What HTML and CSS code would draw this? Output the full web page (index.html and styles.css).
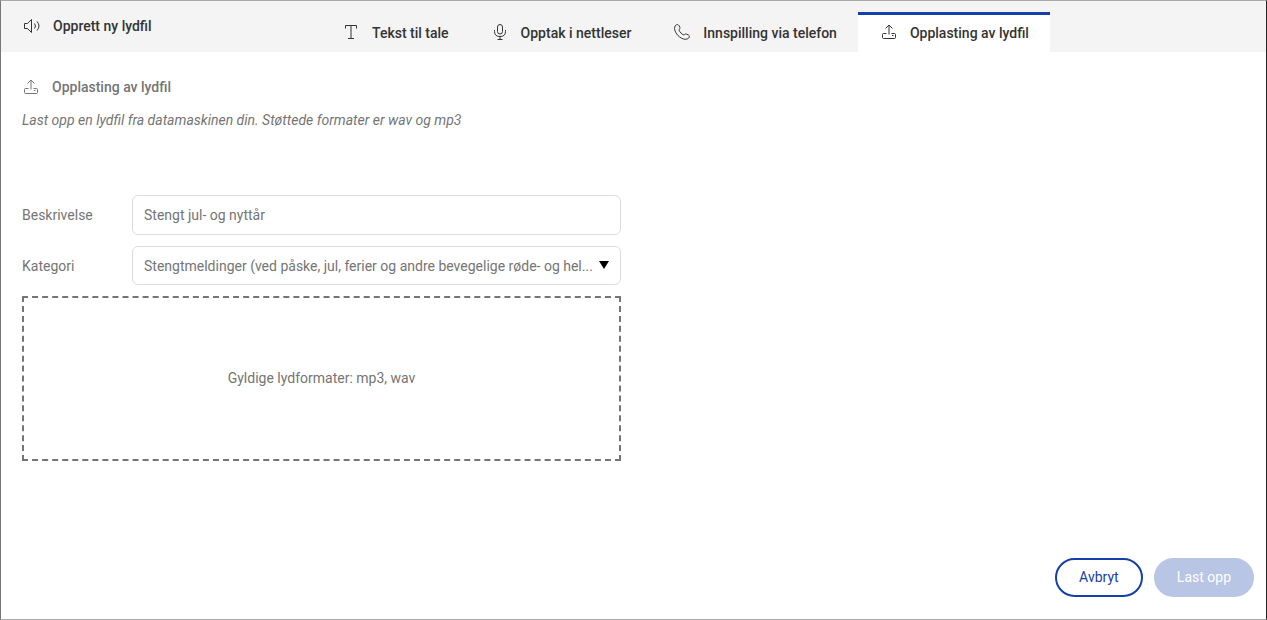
FILE: index.html
```html
<!DOCTYPE html>
<html lang="nb">
<head>
<meta charset="utf-8">
<meta name="viewport" content="width=device-width, initial-scale=1">
<title>Opprett ny lydfil</title>
<link rel="stylesheet" href="styles.css">
</head>
<body>
<svg class="sprite" aria-hidden="true">
  <symbol id="upload" viewBox="0 0 16 16">
    <path d="M8 10.500V1M4.500 4.500 8 1 11.500 4.500M5.500 9.500H2.500Q1.500 9.500 1.500 10.500V13.500Q1.500 14.500 2.500 14.500H13.500Q14.500 14.500 14.500 13.500V10.500Q14.500 9.500 13.500 9.500H10.500M11 11.500H12.500"/>
  </symbol>
</svg>
<div class="dialog">
  <header class="header">
    <h1 class="title">
      <svg class="icon icon-title" viewBox="0 0 18 16" aria-hidden="true"><path d="M1.500 5.500H4.500L8.500 1.500V14.500L4.500 10.500H1.500ZM11.500 5.500Q13.500 8 11.500 10.500M14 3.500Q18 8 14 12.500"/></svg>
      <span>Opprett ny lydfil</span>
    </h1>
    <nav class="tabs">
      <button type="button" class="tab">
        <svg class="icon" viewBox="0 0 16 16" aria-hidden="true"><path d="M2.500 4.500V1.500H13.500V4.500M8 1.500V14.500M5 14.500H11"/></svg>
        <span>Tekst til tale</span>
      </button>
      <button type="button" class="tab">
        <svg class="icon" viewBox="0 0 16 16" aria-hidden="true"><rect x="5.500" y="0.500" width="5" height="9.500" rx="2.500"/><path d="M2.500 6V7.500Q2.500 12.500 8 12.500T13.500 7.500V6M8 12.500V15.500M5.500 15.500H10.500"/></svg>
        <span>Opptak i nettleser</span>
      </button>
      <button type="button" class="tab">
        <svg class="icon" viewBox="0 0 16 16" aria-hidden="true"><path d="M1.500 1.500C2.500 .3 4.200.3 4.900 1.500L5.800 3.200C6.200 4.100 5.800 4.700 5.300 5.300 4.900 5.900 5 6.500 5.500 7.200 6.400 8.600 7.600 9.700 8.900 10.600 9.600 11 10.200 11 10.700 10.500 11.300 9.900 12 9.800 12.700 10.100L14.500 11.100C15.700 11.800 15.700 13 14.700 14 13 15.700 10.300 15.700 7.500 14.200 4.800 12.700 2.900 10.700 1.600 8.200.3 5.600.2 3.200 1.500 1.500Z"/></svg>
        <span>Innspilling via telefon</span>
      </button>
      <button type="button" class="tab tab-active" aria-current="page">
        <svg class="icon" aria-hidden="true"><use href="#upload"/></svg>
        <span>Opplasting av lydfil</span>
      </button>
    </nav>
  </header>
  <main class="content">
    <h2 class="subtitle">
      <svg class="icon icon-title" aria-hidden="true"><use href="#upload"/></svg>
      <span>Opplasting av lydfil</span>
    </h2>
    <p class="intro">Last opp en lydfil fra datamaskinen din. Støttede formater er wav og mp3</p>
    <form class="form" id="upload-form">
      <label for="description">Beskrivelse</label>
      <input class="field" id="description" type="text" value="Stengt jul- og nyttår">
      <label for="category">Kategori</label>
      <div class="select-wrap">
        <select class="field field-select" id="category">
          <option>Stengtmeldinger (ved påske, jul, ferier og andre bevegelige røde- og hel...</option>
        </select>
        <svg class="arrow" viewBox="0 0 10 8" aria-hidden="true"><path d="M0 0H10L5 8Z"/></svg>
      </div>
      <div class="dropzone">Gyldige lydformater: mp3, wav</div>
    </form>
  </main>
  <footer class="footer">
    <button type="button" class="btn btn-outline">Avbryt</button>
    <button type="submit" form="upload-form" class="btn btn-primary" disabled>Last opp</button>
  </footer>
</div>
</body>
</html>
```
FILE: styles.css
```css
* {
  box-sizing: border-box;
}

body {
  margin: 0;
  font-family: Roboto, "Noto Sans", sans-serif;
  font-size: 14px;
  line-height: 20px;
  color: #757575;
  background: #fff;
}

button,
input,
select {
  font: inherit;
  color: inherit;
}

.sprite {
  display: none;
}

.dialog {
  display: flex;
  flex-direction: column;
  min-height: 100vh;
  border: 1px solid #aaa;
  border-left-color: #777;
  border-right-color: #222;
}

.header {
  display: flex;
  background: #f4f4f4;
  color: #333;
}

.title,
.subtitle {
  display: flex;
  align-items: center;
  gap: 12px;
  margin: 0;
  font-size: 14px;
  font-weight: 500;
}

.title {
  flex: 0 0 320px;
  padding: 0 0 2px 22px;
}

.icon {
  flex: none;
  width: 16px;
  height: 16px;
  fill: none;
  stroke: currentColor;
  stroke-width: 1;
}

.icon-title {
  width: 18px;
}

.tabs {
  display: flex;
  padding-top: 11px;
}

.tab {
  display: flex;
  align-items: center;
  gap: 13px;
  height: 40px;
  padding: 0 21px 2px 22px;
  border: 0;
  border-top: 3px solid transparent;
  background: transparent;
  font-weight: 500;
  white-space: nowrap;
}

.tab .icon {
  margin-bottom: 2px;
}

.tab-active {
  padding-left: 23px;
  border-top-color: #153fa8;
  background: #fff;
}

.content {
  flex: 1;
  padding: 25px 21px;
}

.intro {
  margin: 13px 0 0;
  font-style: italic;
}

.form {
  display: grid;
  grid-template-columns: 110px 1fr;
  align-items: center;
  row-gap: 11px;
  max-width: 599px;
  margin-top: 65px;
}

.field {
  display: block;
  width: 100%;
  height: 40px;
  padding: 0 11px;
  border: 1px solid #dcdcdc;
  border-radius: 6px;
  background: #fff;
}

.select-wrap {
  position: relative;
}

.field-select {
  height: 39px;
  padding-right: 24px;
  appearance: none;
  text-overflow: ellipsis;
}

.arrow {
  position: absolute;
  top: 15px;
  right: 12px;
  width: 10px;
  height: 8px;
  pointer-events: none;
}

.dropzone {
  grid-column: 1 / -1;
  display: flex;
  align-items: center;
  justify-content: center;
  height: 165px;
  padding-bottom: 2px;
  border: 2px dashed #757575;
}

.footer {
  display: flex;
  justify-content: flex-end;
  gap: 11px;
  padding: 0 12px 22px;
}

.btn {
  height: 39px;
  min-width: 88px;
  padding: 0 21px 2px;
  border: 2px solid #153fa8;
  border-radius: 20px;
}

.btn-outline {
  background: #fff;
  color: #153fa8;
}

.btn-primary {
  border-color: #b9c5e5;
  background: #b9c5e5;
  color: #fff;
}
```
